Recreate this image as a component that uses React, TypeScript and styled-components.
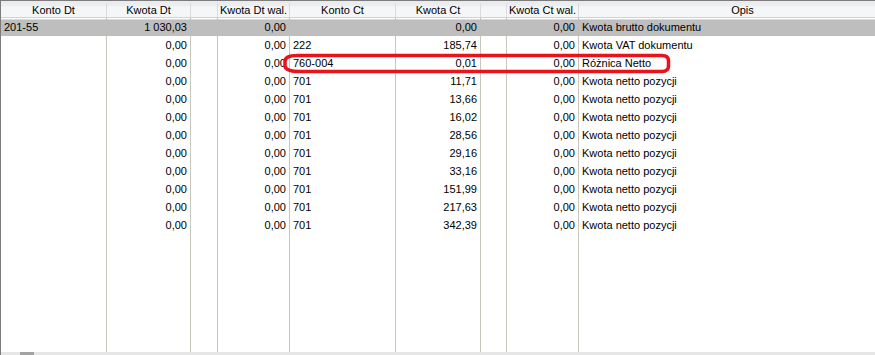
import React from "react";
import styled, { createGlobalStyle } from "styled-components";

const cols = "106px 84px 27px 72px 106px 85px 26px 72px 328px";

const GlobalStyle = createGlobalStyle`
  html, body {
    margin: 0;
    padding: 0;
    background: #ffffff;
  }
  body {
    font-family: "Liberation Sans", Arial, sans-serif;
    font-size: 11px;
    color: #000000;
  }
`;

const Frame = styled.div`
  position: relative;
  width: 875px;
  height: 355px;
  box-sizing: border-box;
  overflow: hidden;
  border-top: 1px solid #7c7c7c;
  border-left: 1px solid #7c7c7c;
  display: flex;
  flex-direction: column;
  background: #ffffff;
`;

const HeaderRow = styled.div`
  display: grid;
  grid-template-columns: ${cols};
  height: 17px;
  box-sizing: border-box;
  border-bottom: 1px solid #d2d2d2;
  background: linear-gradient(#e9eaec 0, #eeeff1 5px, #f5f6f8 6px, #f5f6f8 100%);
`;

const HeaderCell = styled.div`
  box-sizing: border-box;
  border-right: 1px solid #dcdcdc;
  line-height: 16px;
  text-align: center;
  white-space: nowrap;
  overflow: hidden;
  margin: 2px 0 0;
  line-height: 14px;
`;

const Row = styled.div<{ $selected?: boolean }>`
  display: grid;
  grid-template-columns: ${cols};
  height: 18px;
  flex: none;
  background: ${(p) =>
    p.$selected
      ? "linear-gradient(#ffffff 0 1px, #dadada 1px 2px, #bebebe 2px 100%)"
      : "#ffffff"};
`;

const Cell = styled.div<{ $align?: "left" | "right"; $selected?: boolean }>`
  box-sizing: border-box;
  border-right: 1px solid ${(p) => (p.$selected ? "#bebebe" : "#c9c6bd")};
  line-height: 18px;
  padding: 0 ${(p) => (p.$align === "right" ? "3px" : "0")} 0
    ${(p) => (p.$align === "left" ? "3px" : "0")};
  text-align: ${(p) => p.$align ?? "left"};
  white-space: nowrap;
  overflow: hidden;
`;

const Filler = styled.div`
  display: grid;
  grid-template-columns: ${cols};
  flex: 1;
`;

const FillerCell = styled.div`
  border-right: 1px solid #c9c6bd;
`;

const ScrollTrack = styled.div`
  height: 3px;
  flex: none;
  background: #e6e6e6;
  position: relative;
`;

const ScrollThumb = styled.div`
  position: absolute;
  left: 19px;
  top: 0;
  width: 14px;
  height: 3px;
  background: #a3a3a3;
`;

const Highlight = styled.svg`
  position: absolute;
  left: -1px;
  top: -1px;
  pointer-events: none;
`;

type Entry = {
  kontoDt?: string;
  kwotaDt: string;
  kwotaDtWal: string;
  kontoCt?: string;
  kwotaCt: string;
  kwotaCtWal: string;
  opis: string;
};

const netto = ["11,71", "13,66", "16,02", "28,56", "29,16", "33,16", "151,99", "217,63", "342,39"];

const rows: Entry[] = [
  { kontoDt: "201-55", kwotaDt: "1 030,03", kwotaDtWal: "0,00", kwotaCt: "0,00", kwotaCtWal: "0,00", opis: "Kwota brutto dokumentu" },
  { kwotaDt: "0,00", kwotaDtWal: "0,00", kontoCt: "222", kwotaCt: "185,74", kwotaCtWal: "0,00", opis: "Kwota VAT dokumentu" },
  { kwotaDt: "0,00", kwotaDtWal: "0,00", kontoCt: "760-004", kwotaCt: "0,01", kwotaCtWal: "0,00", opis: "Różnica Netto" },
  ...netto.map((v) => ({
    kwotaDt: "0,00",
    kwotaDtWal: "0,00",
    kontoCt: "701",
    kwotaCt: v,
    kwotaCtWal: "0,00",
    opis: "Kwota netto pozycji",
  })),
];

const headers = ["Konto Dt", "Kwota Dt", "", "Kwota Dt wal.", "Konto Ct", "Kwota Ct", "", "Kwota Ct wal.", "Opis"];

export default function App() {
  return (
    <>
      <GlobalStyle />
      <Frame>
        <HeaderRow>
          {headers.map((h, i) => (
            <HeaderCell key={i}>{h}</HeaderCell>
          ))}
        </HeaderRow>
        {rows.map((r, i) => {
          const sel = i === 0;
          return (
            <Row key={i} $selected={sel}>
              <Cell $align="left" $selected={sel}>{r.kontoDt}</Cell>
              <Cell $align="right" $selected={sel}>{r.kwotaDt}</Cell>
              <Cell $selected={sel} />
              <Cell $align="right" $selected={sel}>{r.kwotaDtWal}</Cell>
              <Cell $align="left" $selected={sel}>{r.kontoCt}</Cell>
              <Cell $align="right" $selected={sel}>{r.kwotaCt}</Cell>
              <Cell $selected={sel} />
              <Cell $align="right" $selected={sel}>{r.kwotaCtWal}</Cell>
              <Cell $align="left" $selected={sel}>{r.opis}</Cell>
            </Row>
          );
        })}
        <Filler>
          {headers.map((_, i) => (
            <FillerCell key={i} />
          ))}
        </Filler>
        <ScrollTrack>
          <ScrollThumb />
        </ScrollTrack>
        {/* red annotation round the 760-004 row */}
        <Highlight width="875" height="355" viewBox="0 0 875 355">
          <path
            d="M297 55.5 L662 55.5 Q668.5 55.5 668.5 61 L668.5 66 Q668.5 71.5 662 71.5 L300 71.5 Q285.5 71.5 285 66 L285 61 Q285.5 55.5 297 55.5 Z"
            fill="none"
            stroke="#e8131b"
            strokeWidth="3.5"
            strokeLinejoin="round"
          />
        </Highlight>
      </Frame>
    </>
  );
}
